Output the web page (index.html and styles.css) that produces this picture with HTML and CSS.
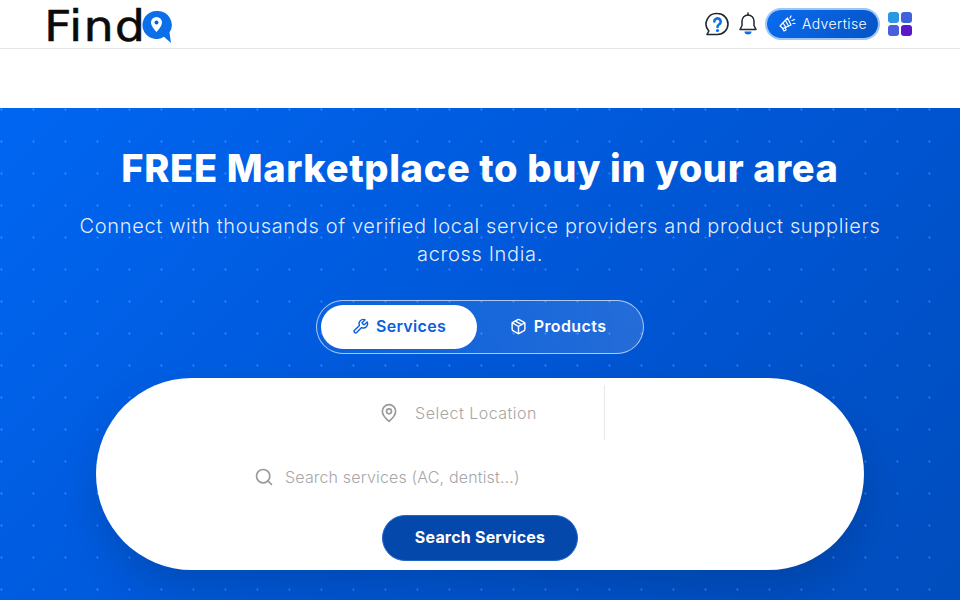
FILE: index.html
```html
<!DOCTYPE html>
<html lang="en">
<head>
<meta charset="utf-8">
<title>FindQ</title>
<link rel="stylesheet" href="styles.css">
</head>
<body>
<header class="topbar">
  <a class="logo" href="#">
    <span class="logo-text">Find</span>
    <svg class="logo-q" width="30" height="38" viewBox="0 0 30 38">
      <path d="M14.500 5a14 14 0 1 0 7.500 25.800l7 6.200-1.500-10.500A14 14 0 0 0 14.500 5z" fill="#0a6fe8"/>
      <path d="M14.500 11a5.500 5.500 0 0 0-5.500 5.500c0 4 5.500 9.500 5.500 9.500s5.500-5.500 5.500-9.500A5.500 5.500 0 0 0 14.500 11z" fill="#fff"/>
      <circle cx="14.500" cy="16.500" r="2" fill="#0a5fd0"/>
    </svg>
  </a>
  <nav class="top-actions">
    <svg class="ic-help" width="24" height="24" viewBox="0 0 24 24" fill="none">
      <path d="M12.500 1.500a10.500 10.500 0 0 1 0 21H2l1.800-3.500A10.500 10.500 0 0 1 12.500 1.500z" stroke="#1f2933" stroke-width="1.600" stroke-linejoin="round"/>
      <path d="M9.300 9.500a3.200 3.200 0 1 1 5 2.700c-1.200.8-1.800 1.300-1.800 2.800" stroke="#0a6fe8" stroke-width="2.600" stroke-linecap="round"/>
      <circle cx="12.500" cy="18.500" r="1.600" fill="#0a6fe8"/>
    </svg>
    <svg class="ic-bell" width="18" height="24" viewBox="0 0 18 24" fill="none">
      <path d="M9 3a6 6 0 0 0-6 6v4.500l-2 4h16l-2-4V9a6 6 0 0 0-6-6z" stroke="#1f2933" stroke-width="1.500" stroke-linejoin="round"/>
      <path d="M9 1v2" stroke="#1f2933" stroke-width="1.500" stroke-linecap="round"/>
      <path d="M5.500 19.500h7a3.500 3 0 0 1-7 0z" fill="#0a6fe8"/>
    </svg>
    <a class="advertise" href="#">
      <svg width="18" height="18" viewBox="0 0 18 18" fill="none" stroke="#fff" stroke-width="1.200" stroke-linejoin="round" stroke-linecap="round">
        <path d="M2 12 9.500 4l3.500 7-8 3.500z"/>
        <path d="m4.500 14.500 1.500 2.500 2-1-1-3"/>
        <path d="M5 9l3 4.500M7.500 6.500l3 5.500"/>
        <path d="M12 4l1-2M14 6.500l2.500-1M15 9.500h2"/>
      </svg>
      <span>Advertise</span>
    </a>
    <div class="apps">
      <span class="app a1"></span><span class="app a2"></span>
      <span class="app a3"></span><span class="app a4"></span>
    </div>
  </nav>
</header>
<div class="spacer"></div>
<main class="hero">
  <h1 class="title">FREE Marketplace to buy in your area</h1>
  <p class="subtitle">Connect with thousands of verified local service providers and product suppliers across India.</p>
  <div class="toggle">
    <button class="tab tab-active">
      <svg width="17" height="17" viewBox="0 0 24 24" fill="none" stroke="#0a5fd8" stroke-width="2" stroke-linecap="round" stroke-linejoin="round"><path d="M14.700 6.300a1 1 0 0 0 0 1.400l1.600 1.600a1 1 0 0 0 1.400 0l3.770-3.770a6 6 0 0 1-7.940 7.940l-6.910 6.910a2.120 2.120 0 0 1-3-3l6.910-6.910a6 6 0 0 1 7.940-7.940l-3.760 3.760z"/></svg>
      <span>Services</span>
    </button>
    <button class="tab">
      <svg width="17" height="17" viewBox="0 0 24 24" fill="none" stroke="#fff" stroke-width="2" stroke-linecap="round" stroke-linejoin="round"><path d="M21 8a2 2 0 0 0-1-1.730l-7-4a2 2 0 0 0-2 0l-7 4A2 2 0 0 0 3 8v8a2 2 0 0 0 1 1.730l7 4a2 2 0 0 0 2 0l7-4A2 2 0 0 0 21 16z"/><path d="M3.300 7 12 12l8.700-5M12 22V12M7.500 4.300l9 5.200"/></svg>
      <span>Products</span>
    </button>
  </div>
  <section class="search-card">
    <div class="loc-row">
      <div class="loc-cell">
        <svg width="20" height="20" viewBox="0 0 24 24" fill="none" stroke="#9a9a9a" stroke-width="2" stroke-linejoin="round"><path d="M12 2a8 8 0 0 0-8 8c0 5.500 8 12 8 12s8-6.500 8-12a8 8 0 0 0-8-8z"/><circle cx="12" cy="10" r="3"/></svg>
        <span class="placeholder loc-text">Select Location</span>
      </div>
    </div>
    <div class="query-row">
      <svg width="20" height="20" viewBox="0 0 24 24" fill="none" stroke="#9a9a9a" stroke-width="2" stroke-linecap="round"><circle cx="11" cy="11" r="8"/><path d="m21 21-4.300-4.300"/></svg>
      <span class="placeholder">Search services (AC, dentist...)</span>
    </div>
    <button class="search-btn">Search Services</button>
  </section>
</main>
</body>
</html>
```
FILE: styles.css
```css
* { box-sizing: border-box; }
html, body { margin: 0; height: 600px; overflow: hidden; }
body { background: #fff; font-family: "Inter", "Noto Sans", sans-serif; }

.topbar {
  height: 49px;
  border-bottom: 1px solid #e3e5e8;
  background: #fff;
  display: flex;
  align-items: center;
  justify-content: space-between;
  padding: 0 48px 0 44px;
}
.logo { display: flex; align-items: flex-start; height: 48px; text-decoration: none; }
.logo-text {
  font-family: "DejaVu Sans", sans-serif;
  font-size: 43px;
  line-height: 48px;
  font-weight: 400;
  color: #0b0b0b;
  letter-spacing: 1px;
  padding-top: 2px;
  -webkit-text-stroke: .5px #0b0b0b;
  transform: scaleX(1.11);
  transform-origin: left center;
}
.logo-q { margin: 6px 0 0 6px; }
.top-actions { display: flex; align-items: center; }
.ic-help { margin-right: 10px; }
.ic-bell { margin-right: 10px; }
.advertise {
  width: 111px;
  height: 28px;
  border-radius: 14px;
  background: linear-gradient(135deg, #0a6cf0, #0553c4);
  box-shadow: 0 0 0 2px #9cc6f7;
  display: flex;
  align-items: center;
  justify-content: center;
  gap: 6px;
  padding-bottom: 2px;
  color: #fff;
  font-size: 14px;
  font-weight: 300;
  letter-spacing: .4px;
  text-decoration: none;
  margin-right: 10px;
}
.apps { display: grid; grid-template-columns: 11px 11px; gap: 2px; }
.app { width: 11px; height: 11px; border-radius: 3px; }
.a1 { background: #2a97e4; }
.a2 { background: #3f63dc; }
.a3 { background: #4a5fdc; }
.a4 { background: #5a18c8; }

.spacer { height: 59px; background: #fff; }

.hero {
  height: 492px;
  background-color: #0357d0;
  background-image:
    radial-gradient(circle at 1.500px 1.500px, rgba(255,255,255,.16) 1px, transparent 1.200px),
    linear-gradient(135deg, #0066f2 0%, #0055d2 60%, #004dbd 100%);
  background-size: 32px 32px, 100% 100%;
  display: flex;
  flex-direction: column;
  align-items: center;
  padding-top: 38px;
}
.title {
  margin: 0;
  color: #fff;
  font-size: 38px;
  line-height: 44px;
  font-weight: 800;
  letter-spacing: .65px;
}
.subtitle {
  margin: 22px 0 0;
  width: 820px;
  text-align: center;
  color: rgba(255,255,255,.9);
  font-size: 20px;
  line-height: 28px;
  font-weight: 300;
  letter-spacing: .65px;
}
.toggle {
  margin-top: 32px;
  width: 328px;
  height: 54px;
  border: 1px solid rgba(255,255,255,.65);
  border-radius: 27px;
  background: linear-gradient(90deg, rgba(255,255,255,.04), rgba(255,255,255,.14));
  padding: 4px;
  display: flex;
}
.tab {
  flex: 1;
  border: 0;
  background: transparent;
  border-radius: 22px;
  color: #fff;
  font: 600 16px/24px "Inter", sans-serif;
  letter-spacing: .4px;
  display: flex;
  align-items: center;
  justify-content: center;
  gap: 7px;
  padding: 0 0 2px;
}
.tab-active { flex: 0 0 156px; background: #fff; color: #0a5fd8; letter-spacing: .3px; }
.search-card {
  margin-top: 24px;
  width: 768px;
  height: 192px;
  border-radius: 96px;
  background: #fff;
  box-shadow: 0 20px 40px rgba(0,0,0,.14);
  display: flex;
  flex-direction: column;
  align-items: center;
  padding-top: 7px;
}
.loc-row { width: 100%; height: 55px; padding-left: 269px; display: flex; }
.loc-cell {
  width: 240px;
  height: 55px;
  padding-right: 67px;
  border-right: 1px solid #e5e7eb;
  display: flex;
  align-items: center;
  justify-content: flex-end;
  gap: 16px;
}
.query-row {
  margin-top: 17px;
  height: 40px;
  width: 452px;
  display: flex;
  align-items: center;
  gap: 11px;
}
.placeholder { color: #a6a6a6; font-size: 16px; font-weight: 300; letter-spacing: .17px; }
.loc-text { letter-spacing: .5px; }
.search-btn {
  margin-top: 18px;
  width: 196px;
  height: 46px;
  border: 1px solid #1f66c8;
  border-radius: 23px;
  background: #0548ab;
  color: #fff;
  font: 700 16px/24px "Inter", sans-serif;
  letter-spacing: .2px;
  padding: 0 0 2px;
}
```
